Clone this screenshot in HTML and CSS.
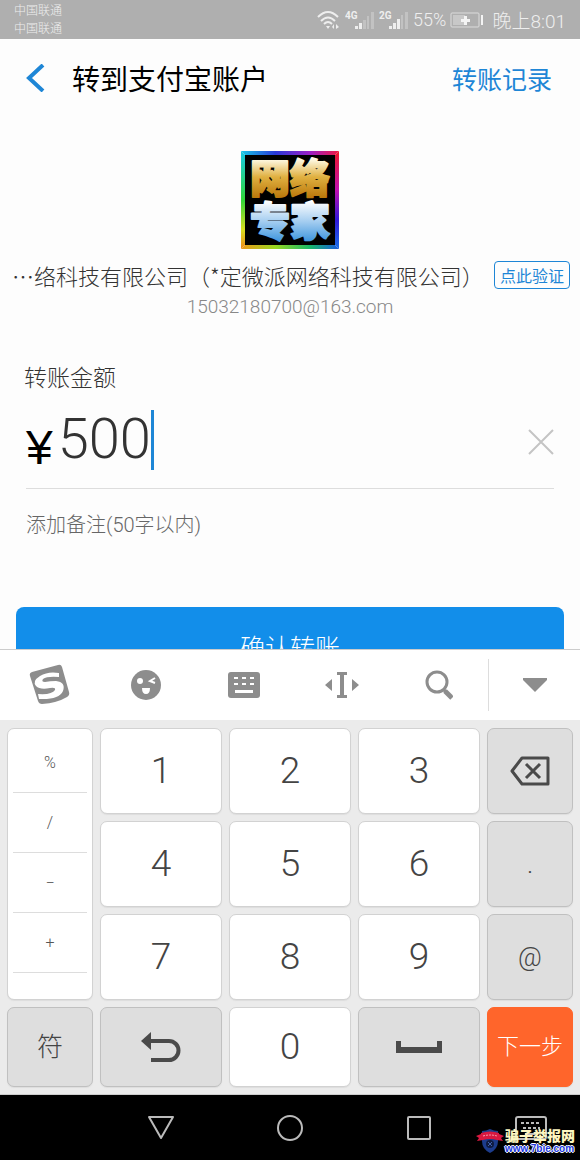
FILE: index.html
```
<!DOCTYPE html>
<html lang="zh-CN">
<head>
  <meta charset="UTF-8">
  <meta name="viewport" content="width=device-width, initial-scale=1">
  <title>转到支付宝账户</title>
  <link rel="stylesheet" href="styles.css">
</head>
<body>
  <div id="status">
    <div class="carriers">
      <div>中国联通</div>
      <div>中国联通</div>
    </div>
    <div class="indicators">
      <svg class="wifi" width="24" height="20" viewBox="0 0 24 20" fill="none" stroke="#eee" stroke-width="2">
        <path d="M1 7 Q11 -3 21 7M4 11 Q11 4 18 11M7 14 Q11 10 15 14"/>
        <path d="M9 16h4l-2 3zM17 14l-2 3 2 2zM19 14l3 3-3 2z" fill="#eee" stroke="none"/>
      </svg>
      <svg width="30" height="20" viewBox="0 0 30 20">
        <text x="0" y="9" class="net">4G</text>
        <path d="M10 16h3v3h-3zM14 13h3v6h-3z" fill="#eee"/>
        <path d="M18 10h3v9h-3zM22 6h2v13h-2zM26 2h3v17h-3z" fill="#c2c2c2"/>
      </svg>
      <svg width="30" height="20" viewBox="0 0 30 20">
        <text x="0" y="9" class="net">2G</text>
        <path d="M10 16h3v3h-3zM14 13h3v6h-3zM18 9h3v10h-3z" fill="#eee"/>
        <path d="M22 5h2v14h-2zM26 2h3v17h-3z" fill="#c2c2c2"/>
      </svg>
      <span class="percent">55%</span>
      <svg class="battery" width="34" height="16" viewBox="0 0 34 16">
        <rect x="1" y="1" width="28" height="14" rx="1" fill="none" stroke="#dcdcdc" stroke-width="1"/>
        <rect x="3" y="3" width="12" height="10" fill="#c8c8c8"/>
        <path d="M31 3h2v10h-2zM14 4h3v3h3v3h-3v3h-3v-3h-3v-3h3z" fill="#f4f4f4"/>
      </svg>
      <span class="time">晚上8:01</span>
    </div>
  </div>

  <div id="app">
    <header>
      <button class="back" aria-label="返回">
        <svg width="22" height="28" viewBox="0 0 22 28" fill="none" stroke="#1e86d6" stroke-width="4">
          <path d="M19 1 5 14 19 27"/>
        </svg>
      </button>
      <h1>转到支付宝账户</h1>
      <a class="history" href="#">转账记录</a>
    </header>

    <div class="payee">
      <svg class="avatar" width="98" height="98" viewBox="0 0 98 98">
        <defs>
          <linearGradient id="top" x1="0" x2="1"><stop offset="0" stop-color="#18c8e8"/><stop offset=".35" stop-color="#2838d8"/><stop offset=".7" stop-color="#9a20c8"/><stop offset="1" stop-color="#f01840"/></linearGradient>
          <linearGradient id="right" x1="0" x2="0" y1="0" y2="1"><stop offset="0" stop-color="#f01828"/><stop offset=".4" stop-color="#c010b0"/><stop offset=".7" stop-color="#3018d8"/><stop offset="1" stop-color="#1870e8"/></linearGradient>
          <linearGradient id="bottom" x1="0" x2="1"><stop offset="0" stop-color="#f09818"/><stop offset=".35" stop-color="#98d820"/><stop offset=".7" stop-color="#18b868"/><stop offset="1" stop-color="#1858e0"/></linearGradient>
          <linearGradient id="left" x1="0" x2="0" y1="0" y2="1"><stop offset="0" stop-color="#18c8e8"/><stop offset=".5" stop-color="#30d838"/><stop offset=".8" stop-color="#d8e020"/><stop offset="1" stop-color="#f08818"/></linearGradient>
          <linearGradient id="gold" gradientUnits="userSpaceOnUse" x1="0" x2="0" y1="8" y2="48"><stop offset="0" stop-color="#fffbe8"/><stop offset=".45" stop-color="#e0b040"/><stop offset="1" stop-color="#b87408"/></linearGradient>
          <linearGradient id="sky" gradientUnits="userSpaceOnUse" x1="0" x2="0" y1="50" y2="91"><stop offset="0" stop-color="#fff"/><stop offset=".5" stop-color="#a4cdf0"/><stop offset="1" stop-color="#3c94dc"/></linearGradient>
        </defs>
        <path d="M0 0h98l-49 49z" fill="url(#top)"/>
        <path d="M98 0v98l-49-49z" fill="url(#right)"/>
        <path d="M98 98H0l49-49z" fill="url(#bottom)"/>
        <path d="M0 98V0l49 49z" fill="url(#left)"/>
        <rect x="4" y="4" width="90" height="90"/>
        <text x="9" y="42" fill="url(#gold)" stroke="url(#gold)">网络</text>
        <text x="9" y="85" fill="url(#sky)" stroke="url(#sky)">专家</text>
      </svg>
      <div class="name-row">
        <span class="name">…络科技有限公司（*定微派网络科技有限公司）</span>
        <button class="verify">点此验证</button>
      </div>
      <div class="email">15032180700@163.com</div>
    </div>

    <form>
      <label for="amount">转账金额</label>
      <div class="amount-row">
        <span class="yen">¥</span>
        <input id="amount" type="text" inputmode="decimal" value="500">
        <span class="caret"></span>
        <button type="button" class="clear" aria-label="清除">
          <svg width="26" height="26" viewBox="0 0 26 26" stroke="#c4c4c4" stroke-width="2"><path d="M1 1 25 25M25 1 1 25"/></svg>
        </button>
      </div>
      <input class="remark" type="text" placeholder="添加备注(50字以内)" aria-label="添加备注">
      <button type="button" class="confirm">确认转账</button>
    </form>
  </div>

  <div id="tools">
    <button aria-label="搜狗">
      <svg width="42" height="42" viewBox="0 0 42 42">
        <path d="M4 8 30 1q3-1 4 2l7 25q1 3-2 5-10 6-25 7-3 0-4-3L2 12q-1-3 2-4z" fill="#8d8d8d"/>
        <path d="M31 9Q20 7 12 12q-8 5-4 10 4 4 14 2 6-1 5 2-3 5-17 4l1 5q20 1 24-8 3-9-7-10-6 0-11 1-4 0-2-3 4-3 16-2z" fill="#fff"/>
      </svg>
    </button>
    <button aria-label="表情">
      <svg width="30" height="30" viewBox="0 0 30 30">
        <circle cx="15" cy="15" r="15" fill="#8d8d8d"/>
        <circle cx="9" cy="11" r="3" fill="#fff"/>
        <path d="M24 8l-5 3 5 2" fill="none" stroke="#fff" stroke-width="2"/>
        <path d="M11 18h8q0 6-4 6t-4-6z" fill="#fff"/>
      </svg>
    </button>
    <button aria-label="键盘">
      <svg width="32" height="26" viewBox="0 0 32 26">
        <rect width="32" height="26" rx="3" fill="#8d8d8d"/>
        <path d="M6 5h4v2H6zM14 5h4v2h-4zM22 5h4v2h-4zM6 11h4v2H6zM14 11h4v2h-4zM22 11h4v2h-4zM7 18h18v3H7z" fill="#fff"/>
      </svg>
    </button>
    <button aria-label="移动光标">
      <svg width="34" height="26" viewBox="0 0 34 26" fill="#8d8d8d">
        <path d="M12 0h10v3h-3v20h3v3H12v-3h3V3h-3zM7 7v12l-7-6zM27 7v12l7-6z"/>
      </svg>
    </button>
    <button aria-label="搜索">
      <svg width="28" height="30" viewBox="0 0 28 30" fill="none" stroke="#8d8d8d">
        <circle cx="12" cy="12" r="10" stroke-width="3"/>
        <path d="M18 19l3 3" stroke-width="3"/><path d="M20 21l7 7" stroke-width="5"/>
      </svg>
    </button>
    <button class="hide" aria-label="收起">
      <svg width="24" height="14" viewBox="0 0 24 14" fill="#8d8d8d"><path d="M0 0h24v2L12 14 0 2z"/></svg>
    </button>
  </div>

  <div id="keyboard">
    <div class="symbols">
      <button>%</button>
      <button>/</button>
      <button>−</button>
      <button>+</button>
    </div>
    <button class="key">1</button>
    <button class="key">2</button>
    <button class="key">3</button>
    <button class="key gray" aria-label="删除">
      <svg width="40" height="30" viewBox="0 0 40 30" fill="none" stroke="#4a4a4a" stroke-width="3" stroke-linejoin="round">
        <path d="M12 2h26v26H12L2 15z"/><path d="M16 8l14 14M30 8 16 22"/>
      </svg>
    </button>
    <button class="key">4</button>
    <button class="key">5</button>
    <button class="key">6</button>
    <button class="key gray mark">.</button>
    <button class="key">7</button>
    <button class="key">8</button>
    <button class="key">9</button>
    <button class="key gray mark">@</button>
    <button class="key gray mark">符</button>
    <button class="key gray" aria-label="返回">
      <svg width="40" height="30" viewBox="0 0 40 30">
        <path d="M8 9h20a9 9 0 0 1 0 19H10" fill="none" stroke="#4a4a4a" stroke-width="4"/>
        <path d="M0 9 10 0v18z" fill="#4a4a4a"/>
      </svg>
    </button>
    <button class="key">0</button>
    <button class="key gray" aria-label="空格">
      <svg width="46" height="12" viewBox="0 0 46 12" fill="#4a4a4a"><path d="M0 0h5v6h36V0h5v12H0z"/></svg>
    </button>
    <button class="key next">下一步</button>
  </div>

  <div id="nav">
    <button aria-label="后退">
      <svg width="28" height="26" viewBox="0 0 28 26"><path d="M2 2h24L14 23z"/></svg>
    </button>
    <button aria-label="主页">
      <svg width="28" height="28" viewBox="0 0 28 28"><circle cx="14" cy="14" r="12"/></svg>
    </button>
    <button aria-label="多任务">
      <svg width="26" height="26" viewBox="0 0 26 26"><rect x="2" y="2" width="22" height="22" rx="1"/></svg>
    </button>
    <button aria-label="输入法">
      <svg width="32" height="24" viewBox="0 0 32 24"><rect x="1" y="1" width="30" height="22" rx="2"/><path d="M6 7h20M8 12h17" stroke-dasharray="3 2"/><path d="M10 18h12"/></svg>
    </button>
    <div class="watermark">
      <svg width="28" height="24" viewBox="0 0 28 24">
        <path d="M6 2q4 0 8-2 4 2 8 2v10q0 8-8 12-8-4-8-12z" fill="#1c3c8c"/>
        <path d="M0 7l5-2v-1q9-3 18 0v1l5 2-3 2 2 3-6-1q-7-2-14 0l-6 1 2-3z" fill="#d81840"/>
        <path d="M7 7q7-2 14 0" fill="none" stroke="#f8a0b0" stroke-dasharray="2 1"/>
        <circle cx="14" cy="15" r="4" fill="#101c40"/>
        <path d="M12 13l4 4M16 13l-4 4" stroke="#4060b0"/>
      </svg>
      <div>
        <div class="site">骗子举报网</div>
        <div class="url">www.7bie.com</div>
      </div>
    </div>
  </div>
</body>
</html>
```
FILE: styles.css
```
* {
  box-sizing: border-box;
}
body {
  margin: 0;
  height: 100vh;
  display: flex;
  flex-direction: column;
  overflow: hidden;
  font-family: Roboto, "Noto Sans CJK SC", sans-serif;
  font-weight: 300;
  background: #fdfdfd;
  color: #333;
}
button, input {
  font: inherit;
  color: inherit;
  border: 0;
  padding: 0;
  background: none;
}
button {
  display: flex;
  align-items: center;
  justify-content: center;
}
svg {
  display: block;
}

/* status bar */
#status {
  flex: none;
  height: 39px;
  display: flex;
  justify-content: space-between;
  align-items: center;
  padding: 0 14px;
  background: #afafaf;
  color: #eee;
}
.carriers {
  font-size: 12px;
  line-height: 18px;
}
.indicators {
  display: flex;
  align-items: center;
  gap: 4px;
}
.net {
  font-size: 10px;
  font-weight: 700;
  fill: #eee;
}
.percent {
  font-size: 18px;
}
.time {
  font-size: 19px;
  margin-left: 4px;
}

/* transfer page */
#app {
  flex: 1;
  min-height: 0;
  overflow: hidden;
}
header {
  display: flex;
  align-items: center;
  height: 78px;
  padding: 0 28px 0 24px;
}
.back {
  width: 24px;
  justify-content: flex-start;
}
h1 {
  flex: 1;
  margin: 0 0 0 24px;
  font-size: 28px;
  font-weight: 400;
  color: #000;
}
.history {
  font-size: 25px;
  font-weight: 400;
  color: #1e86d6;
  text-decoration: none;
}
.payee {
  display: flex;
  flex-direction: column;
  align-items: center;
  padding-top: 34px;
}
.avatar text {
  font-family: "Noto Sans CJK SC", sans-serif;
  font-size: 40px;
  font-weight: 900;
  stroke-width: 2;
  stroke-linejoin: round;
}
.name-row {
  align-self: stretch;
  display: flex;
  justify-content: space-between;
  align-items: center;
  margin-top: 11px;
  padding: 0 10px 0 12px;
}
.name {
  font-family: "Noto Sans CJK SC", sans-serif;
  font-size: 22px;
  line-height: 30px;
  white-space: nowrap;
}
.verify {
  height: 28px;
  padding: 0 5px;
  border: 1px solid #1e86d6;
  border-radius: 4px;
  font-size: 16px;
  font-weight: 400;
  color: #1e86d6;
  white-space: nowrap;
}
.email {
  margin-top: 5px;
  font-size: 19px;
  line-height: 24px;
  color: #888;
}
form {
  padding: 43px 16px 0;
}
label {
  display: block;
  padding-left: 8px;
  font-size: 23px;
  line-height: 34px;
}
.amount-row {
  display: flex;
  align-items: center;
  height: 93px;
  margin: 0 10px;
  border-bottom: 1px solid #ddd;
}
.yen {
  font-family: "Liberation Sans", sans-serif;
  font-size: 48px;
  font-weight: 400;
  line-height: 48px;
  padding-top: 12px;
  color: #000;
}
#amount {
  width: 3ch;
  height: 60px;
  margin: 0 0 6px 5px;
  font-size: 56px;
  line-height: 60px;
  outline: none;
}
.caret {
  width: 3px;
  height: 60px;
  margin-bottom: 4px;
  background: #1e86d6;
}
.clear {
  margin-left: auto;
}
.remark {
  display: block;
  width: 100%;
  height: 72px;
  padding: 0 10px;
  font-size: 20px;
}
.remark::placeholder {
  color: #666;
}
.confirm {
  width: 100%;
  height: 78px;
  margin-top: 46px;
  border-radius: 8px;
  background: #128eea;
  color: #fff;
  font-size: 25px;
}

/* keyboard toolbar */
#tools {
  flex: none;
  height: 71px;
  display: flex;
  align-items: center;
  border-top: 1px solid #ccc;
  background: #fff;
}
#tools button {
  flex: 98;
  height: 52px;
}
#tools .hide {
  flex: 91;
  border-left: 1px solid #ddd;
}

/* keys */
#keyboard {
  flex: none;
  display: grid;
  grid-template-columns: 86fr 122fr 122fr 122fr 86fr;
  grid-template-rows: repeat(3, 86px) 80px;
  gap: 7px;
  padding: 8px 7px 7px;
  background: #ebebeb;
  border-bottom: 1px solid #ccc;
}
.key, .symbols {
  background: #fff;
  border: 1px solid #d2d2d2;
  border-radius: 7px;
  box-shadow: 0 1px 1px #ddd;
}
.key {
  font-size: 37px;
  line-height: 40px;
  color: #444;
}
.symbols {
  grid-row: span 3;
  padding: 4px 5px;
}
.symbols button {
  width: 100%;
  height: 60px;
  border-bottom: 1px solid #ddd;
  font-size: 16px;
  color: #555;
}
.gray {
  background: #dedede;
  border-color: #c0c0c0;
}
.mark {
  font-size: 26px;
}
.next {
  background: #ff652b;
  border-color: #ff652b;
  color: #fff;
  font-size: 22px;
}

/* navigation bar */
#nav {
  flex: none;
  position: relative;
  height: 65px;
  display: grid;
  grid-template-columns: 97fr 129fr 129fr 129fr 96fr;
  background: #000;
}
#nav > button:first-child {
  grid-column: 2;
}
#nav button svg {
  fill: none;
  stroke: #bbb;
  stroke-width: 2;
  stroke-linejoin: round;
}
#nav > button {
  margin-left: -2px;
}
.watermark {
  position: absolute;
  right: 5px;
  bottom: 5px;
  display: flex;
  align-items: center;
  gap: 1px;
  font-weight: 700;
}
.site {
  font-family: "Noto Sans CJK SC", sans-serif;
  font-size: 14px;
  font-weight: 900;
  line-height: 16px;
  color: #fdf6c0;
}
.url {
  font-family: "Liberation Sans", sans-serif;
  font-size: 10px;
  line-height: 12px;
  color: #2038e0;
  text-shadow: 1px 0 #fff, -1px 0 #fff, 0 1px #fff, 0 -1px #fff;
}
```
